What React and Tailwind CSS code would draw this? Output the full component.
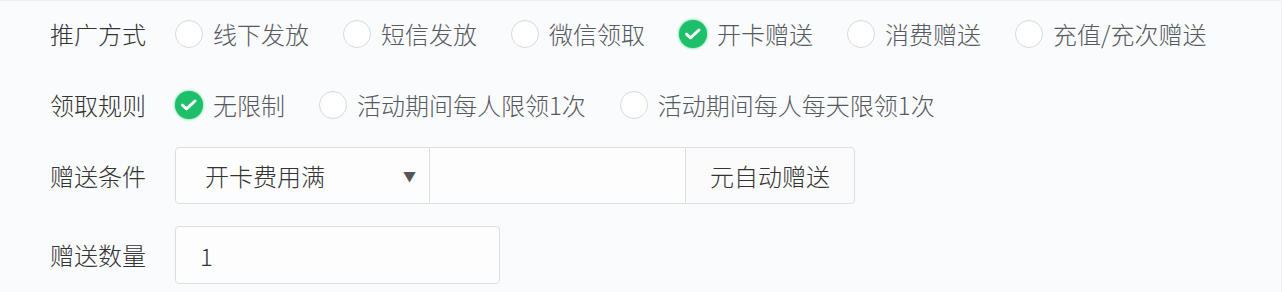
import { useState } from "react";

const fangshi = ["线下发放", "短信发放", "微信领取", "开卡赠送", "消费赠送", "充值/充次赠送"];
const guize = ["无限制", "活动期间每人限领1次", "活动期间每人每天限领1次"];

const Radio = ({ checked, label, onClick }) => (
    <label className="flex items-center gap-[10px] cursor-pointer" onClick={onClick}>
        {checked ? (
            <span className="w-[28px] h-[28px] rounded-full bg-[#1dbf69] flex items-center justify-center shadow-[0_0_3px_#3ad383]">
                <svg width="20" height="20" viewBox="0 0 20 20" fill="none">
                    <path d="M3.5 10.2l4 3.6 8.5-7.8" stroke="white" strokeWidth="3" strokeLinecap="round" strokeLinejoin="round" />
                </svg>
            </span>
        ) : (
            <span className="w-[28px] h-[28px] rounded-full border border-[#d7d9de] bg-white" />
        )}
        <span className="text-[#555960]">{label}</span>
    </label>
);

const App = () => {

    const [fs, setFs] = useState(3);
    const [gz, setGz] = useState(0);

    return (
        <div
            className="w-[1282px] h-[292px] bg-[#fafbfc] border-t border-r border-[#eceef1] text-[24px] leading-none font-light overflow-hidden"
            style={{ fontFamily: '"Noto Sans CJK SC", "Noto Sans", sans-serif' }}
        >

            {/* 推广方式 */}

            <div className="flex items-center h-[66px]">
                <div className="w-[175px] pl-[50px] text-[#333]">推广方式</div>
                <div className="flex items-center gap-[34px]">
                    {fangshi.map((item, index) => (
                        <Radio key={index} label={item} checked={fs === index} onClick={() => setFs(index)} />
                    ))}
                </div>
            </div>

            {/* 领取规则 */}

            <div className="flex items-center h-[75px]">
                <div className="w-[175px] pl-[50px] text-[#333]">领取规则</div>
                <div className="flex items-center gap-[34px]">
                    {guize.map((item, index) => (
                        <Radio key={index} label={item} checked={gz === index} onClick={() => setGz(index)} />
                    ))}
                </div>
            </div>

            {/* 赠送条件 */}

            <div className="flex items-center mt-[5px]">
                <div className="w-[175px] pl-[50px] text-[#333]">赠送条件</div>
                <div className="flex h-[57px]">
                    <div className="w-[255px] flex items-center justify-between pl-[29px] pr-[13px] bg-[#fdfdfe] border border-[#dcdee2] rounded-l-[4px] text-[#333]">
                        <span>开卡费用满</span>
                        <span className="text-[13px] text-[#555]">▼</span>
                    </div>
                    <input className="w-[255px] bg-[#fdfdfe] border-y border-[#dcdee2] outline-none px-3" />
                    <div className="w-[170px] flex items-center justify-center bg-[#fbfbfc] border border-[#dcdee2] rounded-r-[4px] text-[#333]">
                        元自动赠送
                    </div>
                </div>
            </div>

            {/* 赠送数量 */}

            <div className="flex items-center mt-[22px]">
                <div className="w-[175px] pl-[50px] text-[#333]">赠送数量</div>
                <input
                    defaultValue="1"
                    className="w-[325px] h-[58px] bg-[#fdfdfe] border border-[#dcdee2] rounded-[4px] pl-[24px] outline-none text-[#333]"
                />
            </div>

        </div>
    );
};

export default App;
